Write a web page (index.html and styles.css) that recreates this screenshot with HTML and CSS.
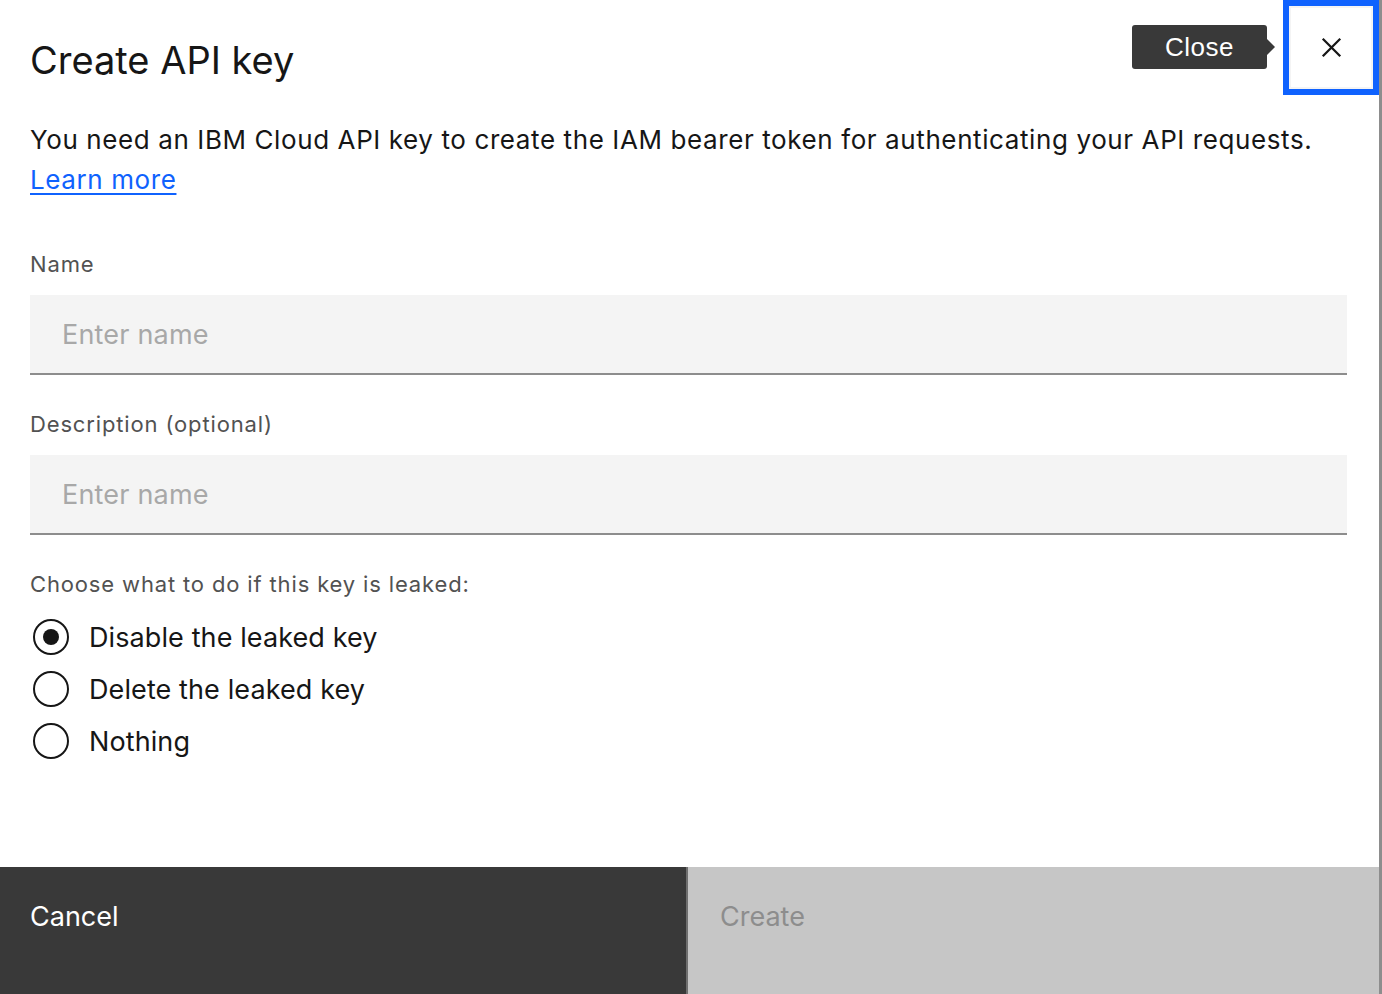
FILE: index.html
```html
<!DOCTYPE html>
<html lang="en">
<head>
  <meta charset="UTF-8">
  <meta name="viewport" content="width=device-width, initial-scale=1.0">
  <title>Create API key</title>

  <link rel="stylesheet" href="styles.css">
</head>

<body>

  <div class="modal">
    <div class="modal-header">
      <h2>Create API key</h2>

      <!-- Close button, shown with keyboard focus and its tooltip -->
      <button class="close-button" aria-label="Close">
        <svg width="24" height="24" viewBox="0 0 24 24">
          <path d="M2 2 L22 22 M22 2 L2 22" stroke="#161616" stroke-width="2.6" fill="none"/>
        </svg>
        <span class="tooltip">Close</span>
      </button>
    </div>

    <div class="modal-content">
      <p class="intro">
        You need an IBM Cloud API key to create the IAM bearer token for authenticating your API requests.<br>
        <a href="#">Learn more</a>
      </p>

      <label class="field-label" for="key-name">Name</label>
      <input class="text-input" id="key-name" type="text" placeholder="Enter name">

      <label class="field-label" for="key-desc">Description (optional)</label>
      <input class="text-input" id="key-desc" type="text" placeholder="Enter name">

      <div class="field-label">Choose what to do if this key is leaked:</div>
      <div class="radio-group">
        <label class="radio-item">
          <span class="radio-circle checked"></span>
          Disable the leaked key
        </label>
        <label class="radio-item">
          <span class="radio-circle"></span>
          Delete the leaked key
        </label>
        <label class="radio-item">
          <span class="radio-circle"></span>
          Nothing
        </label>
      </div>
    </div>

    <div class="modal-footer">
      <button class="btn btn-secondary">Cancel</button>
      <button class="btn btn-disabled" disabled>Create</button>
    </div>
  </div>

</body>
</html>
```

FILE: styles.css
```css
body {
  margin: 0;
  background-color: #8d8d8d;
  font-family: 'Inter', 'Noto Sans', sans-serif;
  color: #161616;
}

.modal {
  position: relative;
  width: 1379px;
  height: 994px;
  background-color: #fff;
  display: flex;
  flex-direction: column;
  overflow: hidden;
}

.modal-header {
  padding: 37px 30px 0 30px;
}

h2 {
  margin: 0;
  font-size: 38px;
  line-height: 46px;
  font-weight: 400;
}

.close-button {
  position: absolute;
  top: 0;
  right: 0;
  width: 96px;
  height: 95px;
  box-sizing: border-box;
  border: 6px solid #0f62fe;
  box-shadow: inset 0 0 0 2px #f4f4f4;
  background-color: #fff;
  display: flex;
  justify-content: center;
  align-items: center;
  padding: 0;
  cursor: pointer;
}

.close-button svg {
  width: 21px;
  height: 21px;
  margin-bottom: 1px;
}

/* Tooltip to the left of the close button */
.tooltip {
  position: absolute;
  right: calc(100% + 22px);
  top: 19px;
  width: 135px;
  height: 44px;
  background-color: #393939;
  border-radius: 3px;
  color: #fff;
  font-family: inherit;
  font-size: 26px;
  line-height: 44px;
  letter-spacing: 0.5px;
  text-align: center;
}

.tooltip::after {
  content: '';
  position: absolute;
  right: -8px;
  top: 14px;
  border-top: 8px solid transparent;
  border-bottom: 8px solid transparent;
  border-left: 8px solid #393939;
}

.modal-content {
  flex: 1;
  padding: 0 32px 0 30px;
  display: flex;
  flex-direction: column;
}

.intro {
  margin: 37px 0 50px 0;
  font-size: 26px;
  line-height: 40px;
  letter-spacing: 0.6px;
}

.intro a {
  color: #0f62fe;
  text-decoration: underline;
  text-underline-offset: 4px;
}

.field-label {
  display: block;
  font-size: 22px;
  line-height: 28px;
  color: #525252;
  letter-spacing: 0.85px;
  margin-bottom: 17px;
}

.text-input {
  height: 80px;
  box-sizing: border-box;
  margin: 0 0 35px 0;
  padding: 0 32px;
  border: none;
  border-bottom: 2px solid #8d8d8d;
  background-color: #f4f4f4;
  font-family: inherit;
  font-size: 27px;
  letter-spacing: 0.2px;
  color: #161616;
  outline: none;
}

.text-input::placeholder {
  color: #a8a8a8;
}

.radio-group {
  display: flex;
  flex-direction: column;
  margin-top: -4px;
}

.radio-item {
  display: flex;
  align-items: center;
  gap: 20px;
  height: 52px;
  padding-left: 3px;
  font-size: 27px;
  letter-spacing: 0.1px;
  color: #161616;
}

.radio-circle {
  width: 36px;
  height: 36px;
  box-sizing: border-box;
  border: 2.5px solid #161616;
  border-radius: 50%;
  display: flex;
  justify-content: center;
  align-items: center;
}

.radio-circle.checked::after {
  content: '';
  width: 16px;
  height: 16px;
  border-radius: 50%;
  background-color: #161616;
}

.modal-footer {
  display: flex;
  height: 127px;
}

.btn {
  border: none;
  margin: 0;
  padding: 32px 30px 0 32px;
  text-align: left;
  display: flex;
  align-items: flex-start;
  font-family: inherit;
  font-size: 27px;
  line-height: 36px;
  letter-spacing: 0;
}

.btn-secondary {
  width: 688px;
  background-color: #393939;
  color: #fff;
  padding-left: 30px;
  border-right: 2px solid #6f6f6f;
}

.btn-disabled {
  flex: 1;
  background-color: #c6c6c6;
  color: #8d8d8d;
}
```
